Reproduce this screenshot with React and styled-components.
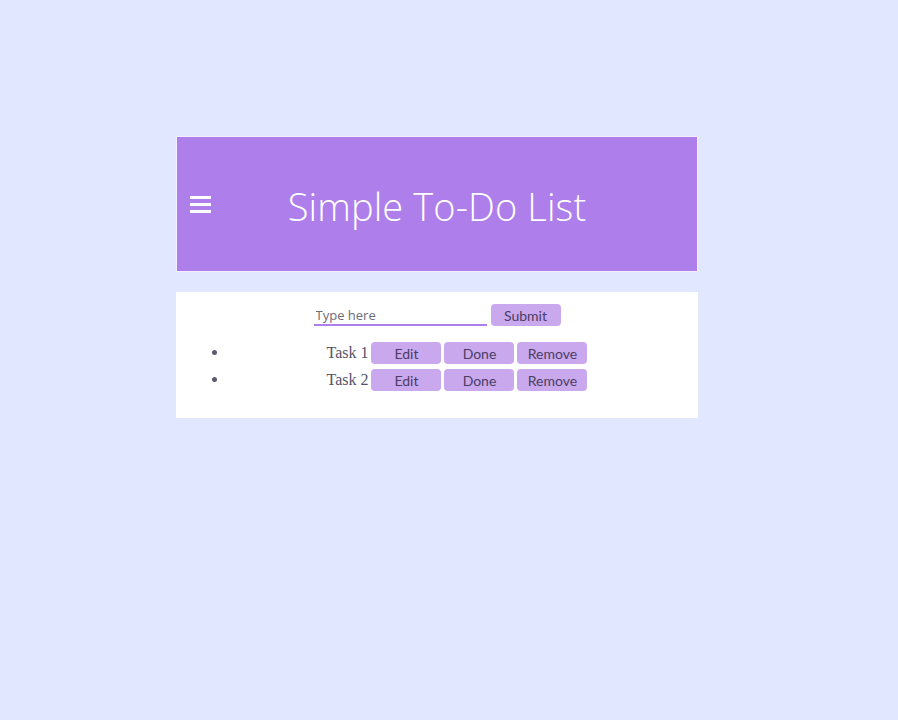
import React, {useState} from 'react';
import styled, {createGlobalStyle} from 'styled-components';

const GlobalStyle = createGlobalStyle`
	html, body {
		margin: 0;
		background: #e1e7fe;
	}
`;

const Page = styled.div`
	padding: 136px 0 0 176px;
	min-height: 584px;
`;

const Card = styled.div`
	width: 522px;
	display: flex;
	flex-direction: column;
	gap: 20px;
`;

const Header = styled.header`
	height: 134px;
	border: 1px solid #f4efff;
	background: #ae7eea;
	display: grid;
	grid-template-columns: 1fr auto 1fr;
	align-items: center;
	padding: 0 13px;
`;

const MenuButton = styled.div`
	display: flex;
	align-items: center;
	color: #ffffff;
`;

const Title = styled.h1`
	margin: 4px 0 0;
	font-family: "Open Sans", "Lato", sans-serif;
	font-weight: 300;
	font-size: 38px;
	color: #ffffff;
	letter-spacing: 0.1px;
`;

const Body = styled.div`
	background: #ffffff;
	padding: 11px 12px 10px;
`;

const InputRow = styled.form`
	display: flex;
	justify-content: center;
	align-items: center;
	gap: 4px;
`;

const TextInput = styled.input`
	width: 173px;
	height: 23px;
	box-sizing: border-box;
	border: none;
	border-bottom: 2px solid #ae7eea;
	outline: none;
	padding: 3px 2px 0;
	font-family: "Open Sans", sans-serif;
	font-size: 13px;
	color: #444;
	background: transparent;
	&::placeholder {
		color: #6e6a78;
	}
`;

const Button = styled.button`
	width: 70px;
	height: 22px;
	border: none;
	border-radius: 4px;
	background: #c9a8ee;
	color: #4a3d63;
	font-family: "Lato", "Open Sans", sans-serif;
	font-size: 14px;
	padding: 1px 0 0;
	margin-left: ${props => props.$gap || 0}px;
	vertical-align: middle;
	cursor: pointer;
`;

const List = styled.ul`
	margin: 15px 0 13px;
	padding-left: 40px;
	color: #5c5a70;
`;

const Item = styled.li`
	height: 27px;
	text-align: center;
	line-height: 22px;
	font-family: "Liberation Serif", serif;
	font-size: 16px;
`;

const TaskName = styled.span`
	vertical-align: middle;
	margin-right: 3px;
	color: ${props => props.$done ? '#9a98aa' : '#55536a'};
	text-decoration: ${props => props.$done ? 'line-through' : 'none'};
`;

function MenuIcon() {
	return (
		<svg width="22" height="20" viewBox="0 0 22 20">
			<rect x="0" y="2" width="21" height="3" fill="currentColor"/>
			<rect x="0" y="9" width="21" height="3" fill="currentColor"/>
			<rect x="0" y="16" width="21" height="3" fill="currentColor"/>
		</svg>
	);
}

export default function App() {
	const [tasks, setTasks] = useState([
		{id: 1, name: 'Task 1', done: false},
		{id: 2, name: 'Task 2', done: false},
	]);
	const [text, setText] = useState('');

	function addTask(e) {
		e.preventDefault();
		if (!text.trim()) return;
		setTasks(current => [...current, {id: Date.now(), name: text, done: false}]);
		setText('');
	}

	return (
		<Page>
			<GlobalStyle/>
			<Card>
				<Header>
					<MenuButton><MenuIcon/></MenuButton>
					<Title>Simple To-Do List</Title>
					<div/>
				</Header>
				<Body>
					<InputRow onSubmit={addTask}>
						<TextInput
							placeholder="Type here"
							value={text}
							onChange={(e) => setText(e.target.value)}
						/>
						<Button type="submit">Submit</Button>
					</InputRow>
					<List>
						{tasks.map(task => (
							<Item key={task.id}>
								<TaskName $done={task.done}>{task.name}</TaskName>
								<Button onClick={() => {
									const name = window.prompt('Edit task', task.name);
									if (name) setTasks(current => current.map(t => t.id === task.id ? {...t, name} : t));
								}}>Edit</Button>
								<Button $gap={3} onClick={() => setTasks(current => current.map(t => t.id === task.id ? {...t, done: !t.done} : t))}>Done</Button>
								<Button $gap={3} onClick={() => setTasks(current => current.filter(t => t.id !== task.id))}>Remove</Button>
							</Item>
						))}
					</List>
				</Body>
			</Card>
		</Page>
	);
}
